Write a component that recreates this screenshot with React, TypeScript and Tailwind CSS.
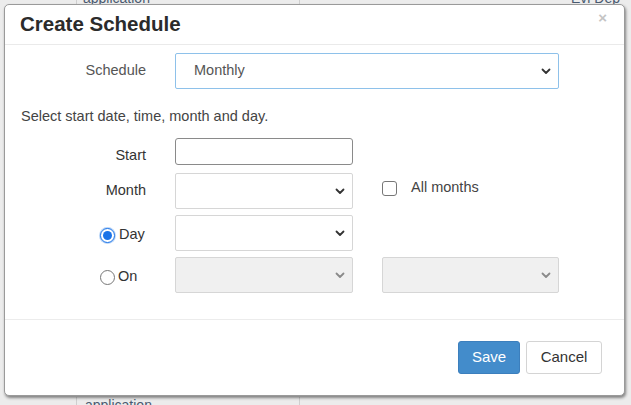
import React from "react";

function Chevron({ disabled = false }: { disabled?: boolean }) {
  return (
    <svg width="10" height="7" viewBox="0 0 10 7" className="shrink-0">
      <polyline
        points="1.5,1.5 5,5 8.5,1.5"
        fill="none"
        stroke={disabled ? "#8a8a8a" : "#333"}
        strokeWidth="1.8"
        strokeLinecap="round"
        strokeLinejoin="round"
      />
    </svg>
  );
}

function SelectBox({
  value = "",
  disabled = false,
  focused = false,
  className = "",
}: {
  value?: string;
  disabled?: boolean;
  focused?: boolean;
  className?: string;
}) {
  return (
    <div
      className={
        "flex h-[36px] items-center justify-between rounded-[2px] border pl-[18px] pr-[7px] text-[14.5px] text-[#555] " +
        (focused ? "border-[#8ec1ea] " : "border-[#d6d6d6] ") +
        (disabled ? "bg-[#f0f0f0] " : "bg-white ") +
        className
      }
    >
      <span>{value}</span>
      <Chevron disabled={disabled} />
    </div>
  );
}

function Radio({ checked }: { checked: boolean }) {
  return checked ? (
    <span className="flex h-[15px] w-[15px] items-center justify-center rounded-full border border-[#1a73e8] bg-white shadow-[0_0_0_1px_#b9d5f7]">
      <span className="h-[9px] w-[9px] rounded-full bg-[#1a73e8]" />
    </span>
  ) : (
    <span className="h-[15px] w-[15px] rounded-full border border-[#777] bg-white" />
  );
}

export default function App() {
  return (
    <div className="relative h-[405px] w-[631px] overflow-hidden bg-[#ececec] font-['Liberation_Sans',Arial,sans-serif]">
      {/* page behind the dialog */}
      <div className="flex h-full flex-col justify-between">
        <div className="-mt-[9px] flex h-[14px] text-[14px] text-[#4a5a70]">
          <div className="w-[77px] border-r border-[#cfcfcf]" />
          <div className="w-[223px] border-r border-[#cfcfcf] pl-[6px] leading-[14px]">application</div>
          <div className="flex-1" />
          <div className="w-[60px] leading-[14px]">Evi Dep</div>
        </div>
        <div className="-mb-[8px] flex h-[16px] text-[14px] text-[#4a5a70]">
          <div className="w-[77px] border-r border-[#cfcfcf]" />
          <div className="w-[223px] border-r border-[#cfcfcf] pl-[8px] leading-[16px]">application</div>
          <div className="flex-1" />
        </div>
      </div>

      {/* dialog */}
      <div className="absolute left-[4px] top-[4px] flex h-[392px] w-[621px] flex-col rounded-[5px] border border-[#9a9a9a] bg-white shadow-[1px_2px_3px_rgba(0,0,0,0.45)]">
        <div className="flex h-[40px] items-center justify-between border-b border-[#eaeaea] pl-[15px] pr-[17px]">
          <h1 className="text-[20.5px] font-bold text-[#2b2b2b]">Create Schedule</h1>
          <span className="-mt-[12px] text-[15px] font-bold text-[#c4c4c4]">×</span>
        </div>

        <div className="flex-1 pl-[16px] pt-[8px] text-[14.5px] text-[#444]">
          <div className="flex items-center">
            <div className="w-[125px] text-right text-[#555]">Schedule</div>
            <SelectBox value="Monthly" focused className="ml-[29px] w-[384px]" />
          </div>

          <p className="mt-[18px] leading-[18px]">Select start date, time, month and day.</p>

          <div className="mt-[13px] flex items-center">
            <div className="w-[125px] translate-y-[4px] text-right text-[#333]">Start</div>
            <div className="ml-[29px] h-[27px] w-[178px] rounded-[3px] border border-[#8a8a8a] bg-white" />
          </div>

          <div className="mt-[8px] flex items-center">
            <div className="w-[125px] text-right text-[#333]">Month</div>
            <SelectBox className="ml-[29px] w-[178px]" />
            <span className="ml-[29px] h-[15px] w-[15px] -translate-y-[3px] rounded-[3px] border border-[#777] bg-white" />
            <span className="ml-[14px] -translate-y-[3px] text-[#444]">All months</span>
          </div>

          <div className="mt-[6px] flex items-center">
            <div className="flex w-[125px] translate-y-[2px] items-center pl-[79px] text-[#333]">
              <Radio checked />
              <span className="ml-[4px]">Day</span>
            </div>
            <SelectBox className="ml-[29px] w-[178px]" />
          </div>

          <div className="mt-[6px] flex items-center">
            <div className="flex w-[125px] translate-y-[2px] items-center pl-[79px] text-[#333]">
              <Radio checked={false} />
              <span className="ml-[3px]">On</span>
            </div>
            <SelectBox disabled className="ml-[29px] w-[178px]" />
            <SelectBox disabled className="ml-[29px] w-[177px]" />
          </div>
        </div>

        <div className="flex h-[76px] items-center justify-end gap-[6px] border-t border-[#ececec] pr-[22px]">
          <button className="h-[33px] w-[62px] rounded-[3px] border border-[#3c7fbd] bg-[#438ccb] text-[15px] text-white">
            Save
          </button>
          <button className="h-[33px] w-[76px] rounded-[3px] border border-[#d4d4d4] bg-white text-[15px] text-[#333]">
            Cancel
          </button>
        </div>
      </div>
    </div>
  );
}
